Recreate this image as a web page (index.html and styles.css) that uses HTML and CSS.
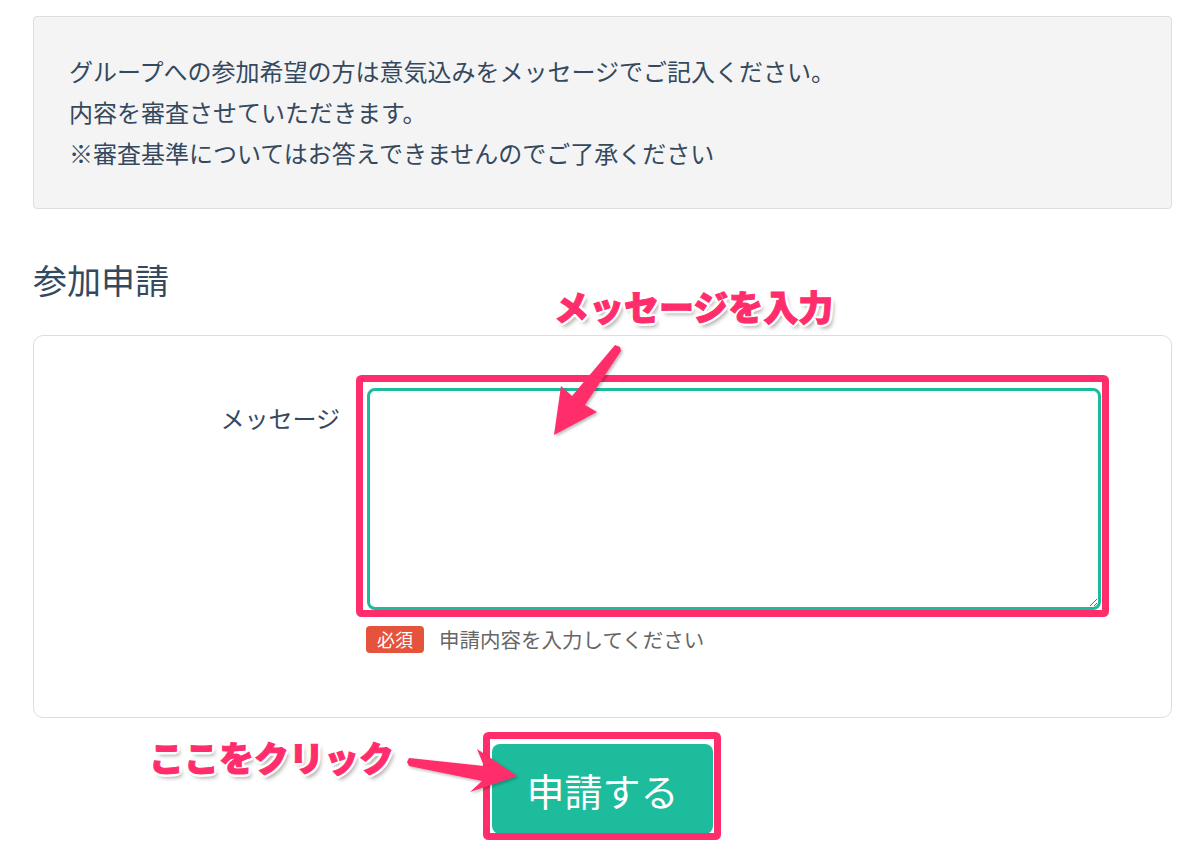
FILE: index.html
```html
<!DOCTYPE html>
<html lang="ja">
<head>
<meta charset="utf-8">
<title>参加申請</title>
<link rel="stylesheet" href="styles.css">
</head>
<body>
<div class="page">
  <div class="container">
    <div class="notice">
      <p>グループへの参加希望の方は意気込みをメッセージでご記入ください。</p>
      <p>内容を審査させていただきます。</p>
      <p>※審査基準についてはお答えできませんのでご了承ください</p>
    </div>

    <h2 class="section-title">参加申請</h2>

    <form class="apply-form">
      <div class="form-row">
        <label class="form-label" for="msg">メッセージ</label>
        <div class="form-field">
          <textarea id="msg" class="message-input"></textarea>
          <div class="hint">
            <span class="badge">必須</span>
            <span class="hint-text">申請内容を入力してください</span>
          </div>
        </div>
      </div>
    </form>

    <div class="actions">
      <button type="button" class="submit-btn">申請する</button>
    </div>
  </div>

  <svg class="overlay" width="1200" height="859" viewBox="0 0 1200 859">
    <defs>
      <filter id="sh" x="-20%" y="-20%" width="140%" height="140%">
        <feDropShadow dx="1.5" dy="1.5" stdDeviation="1.5" flood-color="#000" flood-opacity="0.3"/>
      </filter>
    </defs>
    <rect x="359.5" y="378.5" width="746" height="235" rx="2" fill="none" stroke="#ff2d6b" stroke-width="7"/>
    <rect x="486.5" y="735.5" width="231" height="101" rx="2" fill="none" stroke="#ff2d6b" stroke-width="7"/>
    <polygon filter="url(#sh)" fill="#ff2d6b" points="615,345 620,347 621,351 585,405 597,412 554,435 561,386 572,396"/>
    <polygon filter="url(#sh)" fill="#ff2d6b" points="409,758 484,766 477,749 517,776 470,792 482,781 409,766 407,762"/>
  </svg>

  <div class="callout callout-message">メッセージを入力</div>
  <div class="callout callout-click">ここをクリック</div>
</div>
</body>
</html>
```

FILE: styles.css
```css
* { box-sizing: border-box; }

html, body {
  margin: 0;
  padding: 0;
  background: #ffffff;
}

body {
  font-family: "Noto Sans CJK JP", "Noto Sans", sans-serif;
  color: #34495e;
}

.page {
  position: relative;
  width: 1200px;
  height: 859px;
  overflow: hidden;
}

.container {
  width: 1172px;
  padding: 16px 0 0 33px;
}

.notice {
  background: #f4f4f4;
  border: 1px solid #dddddd;
  border-radius: 4px;
  padding: 33px 35px 35px;
  font-size: 24px;
  line-height: 41px;
}

.notice p {
  margin: 0;
}

.section-title {
  margin: 51px 0 35px;
  font-size: 34px;
  font-weight: normal;
  line-height: 40px;
  color: #34495e;
}

.apply-form {
  border: 1px solid #dddddd;
  border-radius: 10px;
  padding: 52px 70px 63px 0;
  margin: 0;
}

.form-row {
  display: flex;
}

.form-label {
  width: 306px;
  margin-right: 27px;
  text-align: right;
  font-size: 24px;
  line-height: 32px;
  padding-top: 14px;
}

.form-field {
  flex: 1;
}

.message-input {
  display: block;
  width: 734px;
  height: 222px;
  border: 3px solid #1abc9c;
  border-radius: 8px;
  outline: none;
  font-family: inherit;
  font-size: 20px;
  padding: 10px;
  margin: 0;
}

.hint {
  display: flex;
  align-items: center;
  margin-top: 14px;
}

.badge {
  display: inline-block;
  height: 27px;
  line-height: 27px;
  padding: 0 11px;
  border-radius: 4px;
  background: #e5533d;
  color: #ffffff;
  font-size: 18px;
  margin-left: -1px;
}

.hint-text {
  margin-left: 15px;
  font-size: 20.5px;
  color: #666666;
}

.actions {
  display: flex;
  justify-content: center;
  margin-top: 26px;
}

.submit-btn {
  width: 221px;
  height: 90px;
  border: none;
  border-radius: 8px;
  background: #1cbc9c;
  color: #ffffff;
  font-family: inherit;
  font-size: 38px;
  padding: 0;
  cursor: pointer;
}

.overlay {
  position: absolute;
  left: 0;
  top: 0;
  pointer-events: none;
}

.callout {
  position: absolute;
  font-family: "Noto Sans CJK JP", sans-serif;
  font-weight: 900;
  font-size: 35px;
  line-height: 36px;
  color: #ff2d6b;
  white-space: nowrap;
  -webkit-text-stroke: 1px #ff2d6b;
  text-shadow:
    3px 0 0 #fff, -3px 0 0 #fff, 0 3px 0 #fff, 0 -3px 0 #fff,
    2px 2px 0 #fff, -2px -2px 0 #fff, 2px -2px 0 #fff, -2px 2px 0 #fff,
    3px 4px 4px rgba(0, 0, 0, 0.35);
}

.callout-message {
  left: 554px;
  top: 288px;
}

.callout-click {
  left: 149px;
  top: 739px;
}
```
